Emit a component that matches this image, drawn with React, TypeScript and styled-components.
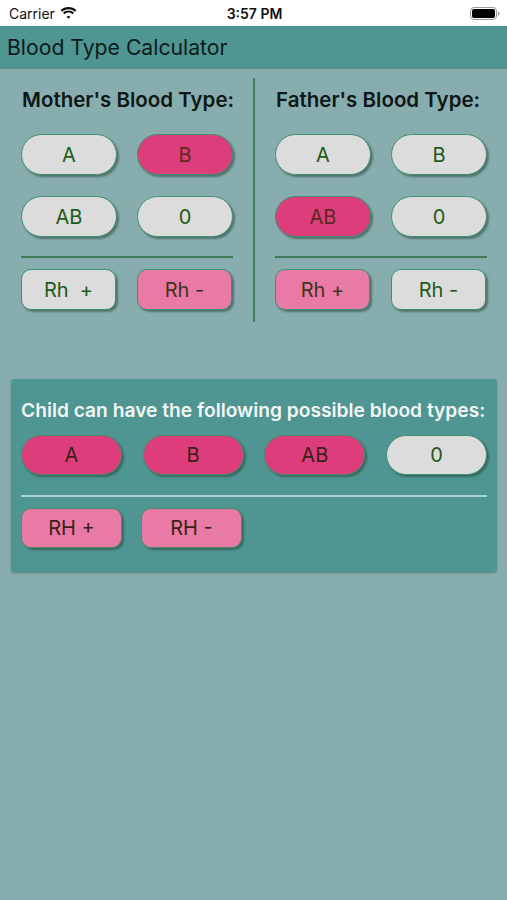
import React from "react";
import styled, { createGlobalStyle } from "styled-components";

const Global = createGlobalStyle`
  html, body { margin: 0; padding: 0; }
  body {
    background: #87adaf;
    font-family: Inter, "Noto Sans", "Liberation Sans", sans-serif;
    width: 507px;
    min-height: 900px;
    -webkit-font-smoothing: antialiased;
  }
`;

const Screen = styled.div`
  width: 507px;
  height: 900px;
  background: #87adaf;
  display: flex;
  flex-direction: column;
`;

const StatusBar = styled.div`
  height: 26px;
  background: #ffffff;
  display: grid;
  grid-template-columns: 1fr auto 1fr;
  align-items: center;
  padding: 0 7px 0 9px;
  box-sizing: border-box;
  font-size: 14px;
  color: #111;
`;

const Carrier = styled.div`
  display: flex;
  align-items: center;
  gap: 5px;
  font-size: 14px;
  font-weight: 400;
`;

const Clock = styled.div`
  font-weight: 600;
  font-size: 14px;
`;

const BatteryWrap = styled.div`
  display: flex;
  justify-content: flex-end;
  align-items: center;
`;

const NavBar = styled.div`
  height: 43px;
  background: #4f9592;
  border-bottom: 1px solid #5d8f8c;
  box-sizing: border-box;
  display: flex;
  align-items: center;
  padding-left: 7px;
  font-size: 21.2px;
  color: #0d1b1a;
  font-weight: 400;
`;

const Parents = styled.div`
  display: flex;
  padding: 9px 20px 0 21px;
`;

const Column = styled.div`
  width: 212px;
  padding: 9px 0 12px;
  display: flex;
  flex-direction: column;
`;

const VDivider = styled.div`
  width: 2px;
  background: #3f7a5a;
  margin: 0 20px;
`;

const ColumnTitle = styled.div<{ $indent?: number }>`
  font-size: 20.5px;
  font-weight: 600;
  color: #0e1616;
  height: 26px;
  line-height: 26px;
  padding-left: ${(p) => p.$indent ?? 1}px;
  white-space: nowrap;
  margin-bottom: 21px;
`;

const ButtonGrid = styled.div`
  display: grid;
  grid-template-columns: 96px 96px;
  column-gap: 20px;
  row-gap: 21px;
`;

type Tone = "gray" | "hot" | "pink";

const toneBg: Record<Tone, string> = {
  gray: "#dcdcdc",
  hot: "#dd3e7b",
  pink: "#e97aa6",
};

const toneText: Record<Tone, string> = {
  gray: "#1e5a17",
  hot: "#5b2a1e",
  pink: "#3f3417",
};

const Pill = styled.div<{ $tone: Tone; $h?: number; $w?: number; $round?: boolean }>`
  width: ${(p) => p.$w ?? 96}px;
  height: ${(p) => p.$h ?? 41}px;
  box-sizing: border-box;
  border-radius: ${(p) => (p.$round ? 21 : 10)}px;
  background: ${(p) => toneBg[p.$tone]};
  border: 1.5px solid #3d9070;
  box-shadow: 2px 2px 2px rgba(40, 70, 55, 0.55);
  display: flex;
  align-items: center;
  justify-content: center;
  font-size: 20px;
  color: ${(p) => toneText[p.$tone]};
  font-weight: 400;
  white-space: pre;
`;

const HLine = styled.div<{ $light?: boolean }>`
  height: 2px;
  background: ${(p) => (p.$light ? "#a9d2d5" : "#3f7a5a")};
  margin: ${(p) => (p.$light ? "20px 0 11px" : "19px 0 11px")};
`;

const Card = styled.div`
  margin: 57px 10px 0 11px;
  background: #4f9592;
  border-radius: 4px;
  box-shadow: 0 1px 2px rgba(40, 70, 70, 0.45);
  padding: 18px 10px 24px 10px;
`;

const CardTitle = styled.div`
  color: #f2f6f5;
  font-size: 19.2px;
  font-weight: 600;
  line-height: 26px;
  white-space: nowrap;
  margin-bottom: 12px;
`;

const ChildRow = styled.div`
  display: flex;
  justify-content: space-between;
`;

const RhRow = styled.div`
  display: flex;
  gap: 19px;
`;

const ChildPill = styled(Pill)`
  border: 1px solid #4f8a6a;
  color: #3b1f18;
`;

const Wifi = () => (
  <svg width="17" height="12" viewBox="0 0 17 12">
    <path d="M8.5 2.2c2.5 0 4.8 1 6.5 2.6l1.4-1.5C14.3 1.3 11.5 0.1 8.5 0.1S2.7 1.3 0.6 3.3L2 4.8C3.7 3.2 6 2.2 8.5 2.2z" fill="#111" />
    <path d="M8.5 5.6c1.6 0 3 0.6 4.1 1.6l1.4-1.5C12.6 4.3 10.6 3.5 8.5 3.5S4.4 4.3 3 5.7l1.4 1.5c1.1-1 2.5-1.6 4.1-1.6z" fill="#111" />
    <path d="M8.5 8.9c0.8 0 1.5 0.3 2 0.8L8.5 11.8 6.5 9.7c0.5-0.5 1.2-0.8 2-0.8z" fill="#111" />
  </svg>
);

const Battery = () => (
  <svg width="30" height="13" viewBox="0 0 30 13">
    <rect x="0.5" y="0.5" width="26" height="12" rx="3.5" fill="none" stroke="#9a9a9a" />
    <rect x="2" y="2" width="23" height="9" rx="2" fill="#000" />
    <path d="M28 4.5v4c0.9-0.3 1.5-1.1 1.5-2s-0.6-1.7-1.5-2z" fill="#9a9a9a" />
  </svg>
);

type Sel = { label: string; tone: Tone };

const ParentColumn = ({
  title,
  types,
  rh,
  indent,
}: {
  title: string;
  types: Sel[];
  rh: Sel[];
  indent?: number;
}) => (
  <Column>
    <ColumnTitle $indent={indent}>{title}</ColumnTitle>
    <ButtonGrid>
      {types.map((t) => (
        <Pill key={t.label} $tone={t.tone} $round>
          {t.label}
        </Pill>
      ))}
    </ButtonGrid>
    <HLine />
    <ButtonGrid>
      {rh.map((t) => (
        <Pill key={t.label} $tone={t.tone} $w={95}>
          {t.label}
        </Pill>
      ))}
    </ButtonGrid>
  </Column>
);

export default function App() {
  return (
    <>
      <Global />
      <Screen>
        <StatusBar>
          <Carrier>
            Carrier <Wifi />
          </Carrier>
          <Clock>3:57 PM</Clock>
          <BatteryWrap>
            <Battery />
          </BatteryWrap>
        </StatusBar>
        <NavBar>Blood Type Calculator</NavBar>
        <Parents>
          <ParentColumn
            title="Mother's Blood Type:"
            types={[
              { label: "A", tone: "gray" },
              { label: "B", tone: "hot" },
              { label: "AB", tone: "gray" },
              { label: "0", tone: "gray" },
            ]}
            rh={[
              { label: "Rh  +", tone: "gray" },
              { label: "Rh -", tone: "pink" },
            ]}
          />
          <VDivider />
          <ParentColumn
            title="Father's Blood Type:"
            types={[
              { label: "A", tone: "gray" },
              { label: "B", tone: "gray" },
              { label: "AB", tone: "hot" },
              { label: "0", tone: "gray" },
            ]}
            rh={[
              { label: "Rh +", tone: "pink" },
              { label: "Rh -", tone: "gray" },
            ]}
          />
        </Parents>
        <Card>
          <CardTitle>Child can have the following possible blood types:</CardTitle>
          <ChildRow>
            <ChildPill $tone="hot" $w={101} $h={40} $round>A</ChildPill>
            <ChildPill $tone="hot" $w={101} $h={40} $round>B</ChildPill>
            <ChildPill $tone="hot" $w={101} $h={40} $round>AB</ChildPill>
            <Pill $tone="gray" $w={101} $h={40} $round>0</Pill>
          </ChildRow>
          <HLine $light />
          <RhRow>
            <ChildPill $tone="pink" $w={101} $h={40}>RH +</ChildPill>
            <ChildPill $tone="pink" $w={101} $h={40}>RH -</ChildPill>
          </RhRow>
        </Card>
      </Screen>
    </>
  );
}
